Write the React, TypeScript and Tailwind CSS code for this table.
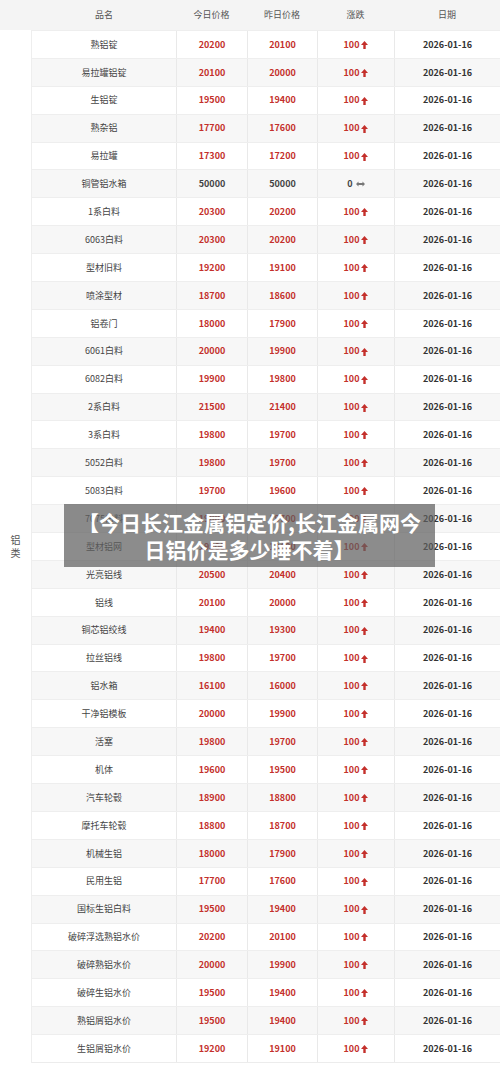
import React from "react";

type Row = [string, string, string, string?];

const rows: Row[] = [
  ["熟铝锭", "20200", "20100"],
  ["易拉罐铝锭", "20100", "20000"],
  ["生铝锭", "19500", "19400"],
  ["熟杂铝", "17700", "17600"],
  ["易拉罐", "17300", "17200"],
  ["铜管铝水箱", "50000", "50000", "0"],
  ["1系白料", "20300", "20200"],
  ["6063白料", "20300", "20200"],
  ["型材旧料", "19200", "19100"],
  ["喷涂型材", "18700", "18600"],
  ["铝卷门", "18000", "17900"],
  ["6061白料", "20000", "19900"],
  ["6082白料", "19900", "19800"],
  ["2系白料", "21500", "21400"],
  ["3系白料", "19800", "19700"],
  ["5052白料", "19800", "19700"],
  ["5083白料", "19700", "19600"],
  ["7075白料", "19800", "19700"],
  ["型材铝网", "19500", "19400"],
  ["光亮铝线", "20500", "20400"],
  ["铝线", "20100", "20000"],
  ["铜芯铝绞线", "19400", "19300"],
  ["拉丝铝线", "19800", "19700"],
  ["铝水箱", "16100", "16000"],
  ["干净铝模板", "20000", "19900"],
  ["活塞", "19800", "19700"],
  ["机体", "19600", "19500"],
  ["汽车轮毂", "18900", "18800"],
  ["摩托车轮毂", "18800", "18700"],
  ["机械生铝", "18000", "17900"],
  ["民用生铝", "17700", "17600"],
  ["国标生铝白料", "19500", "19400"],
  ["破碎浮选熟铝水价", "20200", "20100"],
  ["破碎熟铝水价", "20000", "19900"],
  ["破碎生铝水价", "19500", "19400"],
  ["熟铝屑铝水价", "19500", "19400"],
  ["生铝屑铝水价", "19200", "19100"],
];

const font = { fontFamily: '"Noto Sans CJK SC", "Noto Sans", sans-serif' };

function UpArrow() {
  return (
    <svg width="7" height="8" viewBox="0 0 7 8" className="ml-[2px] mt-[1px]">
      <path d="M3.5 0 L7 4 L4.7 4 L4.7 8 L2.3 8 L2.3 4 L0 4 Z" fill="#c4302b" />
    </svg>
  );
}

function EqArrow() {
  return (
    <svg width="9" height="6" viewBox="0 0 9 6" className="ml-[3px]">
      <path d="M0 3 L2.5 0.5 L2.5 2 L6.5 2 L6.5 0.5 L9 3 L6.5 5.5 L6.5 4 L2.5 4 L2.5 5.5 Z" fill="#777" />
    </svg>
  );
}

const grid = "grid grid-cols-[144px_71px_70px_77px_106px]";

export default function App() {
  return (
    <div className="relative w-[500px] h-[1071px] bg-white overflow-hidden" style={font}>
      {/* header */}
      <div className="flex h-[30px] bg-[#f4f4f4] text-[9px] text-[#555]">
        <div className="w-[32px]" />
        <div className={grid + " flex-1"}>
          <div className="flex items-center justify-center">品名</div>
          <div className="flex items-center justify-center">今日价格</div>
          <div className="flex items-center justify-center">昨日价格</div>
          <div className="flex items-center justify-center">涨跌</div>
          <div className="flex items-center justify-center">日期</div>
        </div>
      </div>
      {/* body */}
      <div className="flex">
        <div className="w-[32px] flex flex-col items-center justify-center text-[10px] leading-[13px] text-[#555] border-r border-[#eeeeee]">
          <span>铝</span>
          <span>类</span>
        </div>
        <div className="flex-1 flex flex-col border-b border-[#ececec]">
          {rows.map((r, i) => {
            const zero = r[3] === "0";
            const priceColor = zero ? "text-[#444]" : "text-[#c4302b]";
            return (
              <div
                key={i}
                className={
                  grid +
                  " h-[27.9px] border-t border-[#eeeeee] text-[9px] " +
                  (i % 2 === 1 ? "bg-[#f7f7f7]" : "bg-white")
                }
              >
                <div className="flex items-center justify-center text-[#444]">{r[0]}</div>
                <div className={"flex items-center justify-center font-bold border-l border-[#e9e9e9] " + priceColor}>
                  {r[1]}
                </div>
                <div className={"flex items-center justify-center font-bold border-l border-[#e9e9e9] " + priceColor}>
                  {r[2]}
                </div>
                <div className="flex items-center justify-center font-bold border-l border-[#e9e9e9]">
                  {zero ? (
                    <>
                      <span className="text-[#444]">0</span>
                      <EqArrow />
                    </>
                  ) : (
                    <>
                      <span className="text-[#c4302b]">100</span>
                      <UpArrow />
                    </>
                  )}
                </div>
                <div className="flex items-center justify-center font-bold text-[#333] border-l border-[#e9e9e9]">
                  2026-01-16
                </div>
              </div>
            );
          })}
        </div>
      </div>
      {/* overlay caption */}
      <div className="absolute left-[64px] top-[504px] w-[371px] h-[63px] bg-[rgba(95,95,95,0.72)] flex flex-col items-center justify-center text-white font-bold text-[21px] leading-[27px]">
        <div>【今日长江金属铝定价,长江金属网今</div>
        <div>日铝价是多少睡不着】</div>
      </div>
    </div>
  );
}
